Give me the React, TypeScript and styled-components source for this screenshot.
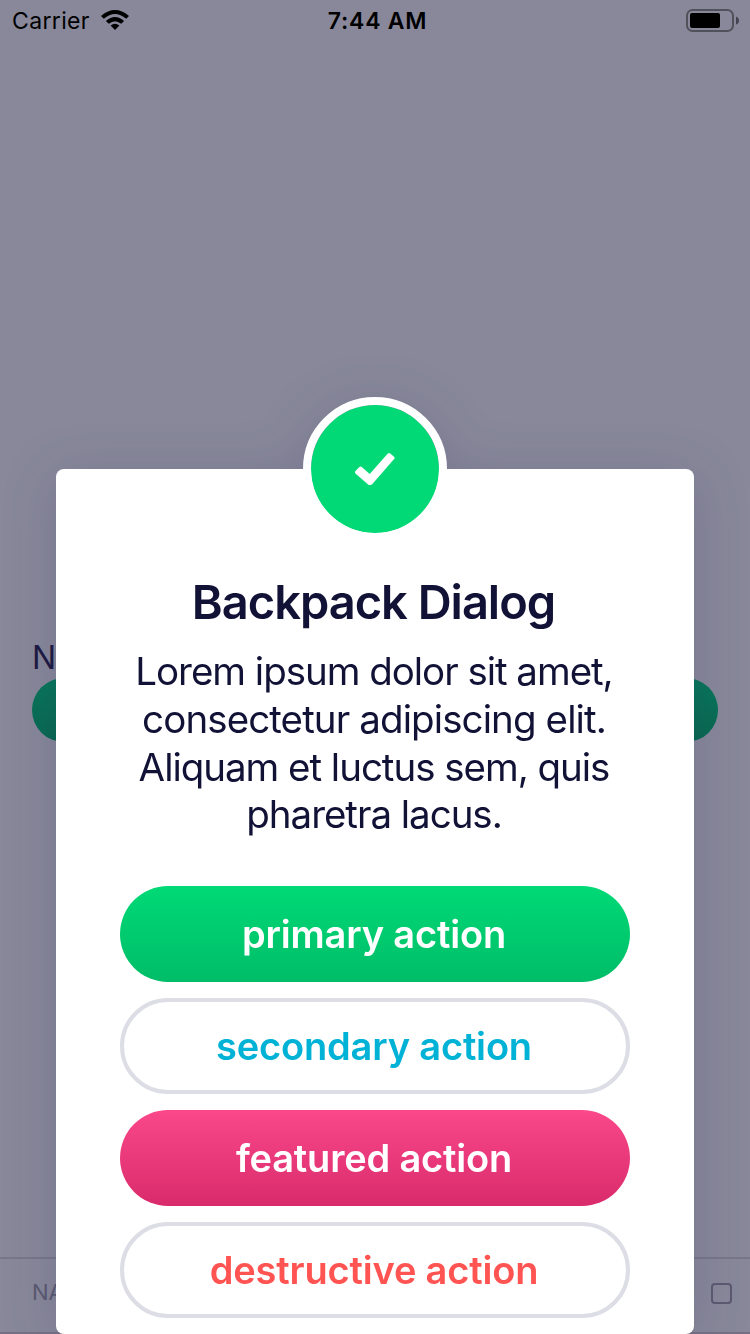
import React from 'react';
import styled, { createGlobalStyle } from 'styled-components';

const GlobalStyle = createGlobalStyle`
  *, *::before, *::after { box-sizing: border-box; }
  body { margin: 0; font-family: Inter, "Liberation Sans", sans-serif; }
`;

const Screen = styled.div`
  position: relative;
  display: flex;
  flex-direction: column;
  width: 750px;
  height: 1334px;
  overflow: hidden;
  background: #88889a;
`;

const StatusBar = styled.header`
  display: grid;
  grid-template-columns: 1fr auto 1fr;
  align-items: center;
  height: 42px;
  padding: 0 10px 0 12px;
  color: #000;
`;

const Carrier = styled.div`
  display: flex;
  align-items: center;
  gap: 11px;
  font-size: 23px;
  letter-spacing: 0.35px;
`;

const WifiIcon = styled.svg`
  margin-bottom: 2px;
`;

const Clock = styled.div`
  padding-left: 3px;
  font-size: 23px;
  font-weight: 600;
  letter-spacing: 0.75px;
`;

const BatteryIcon = styled.svg`
  justify-self: end;
`;

const Page = styled.main`
  flex: 1;
  display: flex;
  flex-direction: column;
  padding: 596px 32px 0;
`;

const PageLabel = styled.div`
  height: 40px;
  font-size: 32px;
  line-height: 40px;
  color: #1d1b42;
`;

const PageButton = styled.div`
  height: 64px;
  width: 686px;
  border-radius: 32px;
  background: linear-gradient(#08775a, #086850);
`;

const TabBar = styled.footer`
  display: flex;
  align-items: center;
  justify-content: space-between;
  height: 77px;
  padding: 0 18px 5px 32px;
  border-top: 2px solid #777789;
  border-bottom: 2px solid #777084;
  color: #5b5a70;
  font-size: 22px;
  line-height: 30px;
`;

const TabLabel = styled.span`
  padding-bottom: 3px;
`;

const TabBox = styled.div`
  width: 21px;
  height: 21px;
  border: 2px solid #5b5a70;
  border-radius: 4px;
`;

const Dialog = styled.section`
  position: absolute;
  left: 56px;
  top: 469px;
  display: flex;
  flex-direction: column;
  align-items: center;
  width: 638px;
  height: 865px;
  padding: 0 64px;
  border-radius: 8px;
  background: #fff;
  filter: drop-shadow(0 8px 26px rgba(37, 32, 95, 0.18));
`;

const Badge = styled.div`
  flex: none;
  display: flex;
  align-items: center;
  justify-content: center;
  width: 144px;
  height: 144px;
  margin-top: -72px;
  border: 8px solid #fff;
  border-radius: 50%;
  background: #00d976;
  background-clip: padding-box;
`;

const Title = styled.h1`
  margin: 31px 3px 0 0;
  font-size: 47px;
  font-weight: 600;
  line-height: 60px;
  letter-spacing: -1px;
  color: #111236;
  white-space: nowrap;
`;

const Message = styled.p`
  display: flex;
  flex-direction: column;
  align-items: center;
  margin: 16px 2px 0 0;
  font-size: 38.5px;
  line-height: 47.8px;
  color: #111236;
`;

const Line = styled.span<{ $spacing: number }>`
  white-space: nowrap;
  letter-spacing: ${(p) => p.$spacing}px;
`;

const Actions = styled.div`
  display: flex;
  flex-direction: column;
  gap: 16px;
  width: 100%;
  margin-top: 47px;
`;

type Kind = 'primary' | 'secondary' | 'featured' | 'destructive';

const kinds: Record<Kind, { fill: string; ink: string; border: string }> = {
  primary: { fill: 'linear-gradient(#00d976, #00bd68)', ink: '#fff', border: '0' },
  secondary: { fill: '#fff', ink: '#00b2d6', border: '4px solid #dddde5' },
  featured: { fill: 'linear-gradient(#fa488a, #d92b6b)', ink: '#fff', border: '0' },
  destructive: { fill: '#fff', ink: '#ff5452', border: '4px solid #dddde5' },
};

const Action = styled.button<{ $kind: Kind }>`
  height: 96px;
  padding: 0 2px 0 0;
  border: ${(p) => kinds[p.$kind].border};
  border-radius: 48px;
  background: ${(p) => kinds[p.$kind].fill};
  color: ${(p) => kinds[p.$kind].ink};
  font: 600 38px Inter, "Liberation Sans", sans-serif;
  letter-spacing: -0.18px;
`;

const lines: [string, number][] = [
  ['Lorem ipsum dolor sit amet,', -1.03],
  ['consectetur adipiscing elit.', -0.9],
  ['Aliquam et luctus sem, quis', -1.03],
  ['pharetra lacus.', -1.03],
];

const actions: Kind[] = ['primary', 'secondary', 'featured', 'destructive'];

export default function App() {
  return (
    <>
      <GlobalStyle />
      <Screen>
        <StatusBar>
          <Carrier>
            Carrier
            <WifiIcon width="28" height="20" viewBox="0 0 28 20">
              <path d="M0 5.9Q14-5.9 28 5.9L25.2 8.8Q14-.6 2.8 8.8Z" />
              <path d="M4.9 10.9Q14 3 23.1 10.9L20.2 13.8Q14 8.5 7.8 13.8Z" />
              <path d="M9.6 15.6Q14 12 18.4 15.6L14 20Z" />
            </WifiIcon>
          </Carrier>
          <Clock>7:44 AM</Clock>
          <BatteryIcon width="54" height="24" viewBox="0 0 54 24">
            <rect x="1" y="1" width="46" height="21" rx="5.5" fill="none" stroke="#51515c" strokeWidth="2" />
            <rect x="4" y="4" width="30" height="15" rx="2" />
            <path d="M50 7.5Q53 8.5 53 11.5Q53 14.5 50 15.5Z" fill="#444450" />
          </BatteryIcon>
        </StatusBar>
        <Page>
          <PageLabel>N</PageLabel>
          <PageButton />
        </Page>
        <TabBar>
          <TabLabel>NA</TabLabel>
          <TabBox />
        </TabBar>
        <Dialog>
          <Badge>
            <svg width="42" height="34" viewBox="0 0 42 34">
              <path
                d="M3.3 16.9L5.4 15Q6.6 13.9 7.8 15L15.7 22.1L33.6 1.7Q34.9 .3 36.3 1.5L40 4.7Q41.2 5.8 40.1 7.1L18.4 32Q16.2 34.1 13.8 32.2L1.7 21.8Q.3 20.5 1.5 19.1Z"
                fill="#fff"
              />
            </svg>
          </Badge>
          <Title>Backpack Dialog</Title>
          <Message>
            {lines.map(([text, spacing]) => (
              <Line key={text} $spacing={spacing}>{text}</Line>
            ))}
          </Message>
          <Actions>
            {actions.map((kind) => (
              <Action key={kind} $kind={kind}>{kind} action</Action>
            ))}
          </Actions>
        </Dialog>
      </Screen>
    </>
  );
}
